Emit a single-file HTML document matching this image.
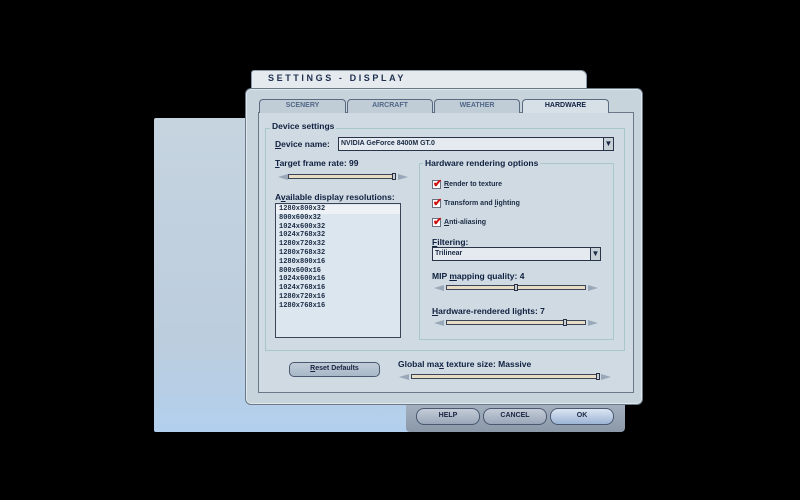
<!DOCTYPE html><html><head><style>
*{margin:0;padding:0;box-sizing:border-box}
body{width:800px;height:500px;background:#000;position:relative;overflow:hidden;font-family:"Liberation Sans",sans-serif;font-weight:bold;color:#1a2a44}
.a{position:absolute}
.t{font-size:8px}
.l{font-size:8.5px;color:#102040}
.btn{position:absolute;border:1.5px solid #4a5870;border-radius:8px;background:linear-gradient(#c4ccd8,#9aa6b8);font-size:7px;text-align:center;color:#1a2440}
.sl{position:absolute;height:5px;background:#e8dcc4;border:1px solid #3a4458}
.th{position:absolute;width:4px;height:7px;background:#c8d0d8;border:1px solid #2a3040}
.cb{position:absolute;width:9px;height:9px;background:#fff;border:1px solid #6a7080;color:#d01010;font-size:11px;line-height:7px}
.item{font-size:7px;height:8.8px;line-height:8.8px;padding-left:3px;font-family:"Liberation Mono",monospace;font-weight:bold}
.tl{position:absolute;width:0;height:0;border-top:3px solid transparent;border-bottom:3px solid transparent;border-right:10px solid #98a8b8}
.tr{position:absolute;width:0;height:0;border-top:3px solid transparent;border-bottom:3px solid transparent;border-left:10px solid #98a8b8}
</style></head><body>
<div class="a" style="left:154px;top:118px;width:258px;height:314px;background:linear-gradient(#c6d4e0 0%,#bccddd 70%,#b2d0ee 100%);border-radius:2px"></div>
<div class="a" style="left:251px;top:70px;width:336px;height:24px;background:#e4eaee;border:1px solid #8898a8;border-radius:3px 6px 0 0"></div>
<div class="a" style="left:268px;top:73px;font-size:9px;letter-spacing:2.6px;color:#203050">SETTINGS - DISPLAY</div>
<div class="a" style="left:406px;top:400px;width:219px;height:32px;background:linear-gradient(#a8b4c2,#8a98a8);border-radius:0 0 4px 4px"></div>
<div class="btn" style="left:416px;top:408px;width:64px;height:17px;line-height:14px">HELP</div>
<div class="btn" style="left:483px;top:408px;width:64px;height:17px;line-height:14px">CANCEL</div>
<div class="btn" style="left:550px;top:408px;width:64px;height:17px;line-height:14px;background:linear-gradient(#dce6f2,#9cb4d4)">OK</div>
<div class="a" style="left:245px;top:88px;width:398px;height:317px;background:#c8d4dc;border:1px solid #6a7888;border-radius:6px;box-shadow:inset 0 0 0 1px #e0e8ee"></div>
<div class="a" style="left:258px;top:112px;width:376px;height:281px;border:1px solid #6a7888;background:#cfdae2"></div>
<div class="a t" style="left:259px;top:99px;width:87px;height:14px;border:1px solid #5a6a80;border-bottom:none;border-radius:4px 4px 0 0;background:#c0ccd6;text-align:center;line-height:12px;color:#506888;font-size:7px">SCENERY</div>
<div class="a t" style="left:347px;top:99px;width:86px;height:14px;border:1px solid #5a6a80;border-bottom:none;border-radius:4px 4px 0 0;background:#c0ccd6;text-align:center;line-height:12px;color:#506888;font-size:7px">AIRCRAFT</div>
<div class="a t" style="left:434px;top:99px;width:86px;height:14px;border:1px solid #5a6a80;border-bottom:none;border-radius:4px 4px 0 0;background:#c0ccd6;text-align:center;line-height:12px;color:#506888;font-size:7px">WEATHER</div>
<div class="a t" style="left:522px;top:99px;width:87px;height:14px;border:1px solid #5a6a80;border-bottom:none;border-radius:4px 4px 0 0;background:#d6e0e6;text-align:center;line-height:12px;color:#102040;font-size:7px">HARDWARE</div>
<div class="a" style="left:265px;top:128px;width:360px;height:223px;border:1px solid #a8c8c8"></div>
<div class="a l" style="left:270px;top:121px;background:#cfdae2;padding:0 2px">Device settings</div>
<div class="a l" style="left:275px;top:139px"><u>D</u>evice name:</div>
<div class="a" style="left:338px;top:137px;width:276px;height:14px;background:#e4eaf0;border:1px solid #2a3448;font-size:7px;line-height:12px;padding-left:2px">NVIDIA GeForce 8400M GT.0</div>
<div class="a" style="left:603px;top:137px;width:11px;height:14px;background:#c8d0d8;border:1px solid #2a3448;font-size:8px;text-align:center;line-height:12px">▼</div>
<div class="a l" style="left:275px;top:158px"><u>T</u>arget frame rate: 99</div>
<div class="tl" style="left:278px;top:174px"></div>
<div class="sl" style="left:288px;top:174px;width:106px"></div>
<div class="th" style="left:392px;top:173px"></div>
<div class="tr" style="left:398px;top:174px"></div>
<div class="a l" style="left:275px;top:192px">A<u>v</u>ailable display resolutions:</div>
<div class="a" style="left:275px;top:203px;width:126px;height:135px;background:#dce6ee;border:1px solid #3a4458;padding-top:1px">
<div class="item" style="background:#eef2f6">1280x800x32</div><div class="item">800x600x32</div><div class="item">1024x600x32</div><div class="item">1024x768x32</div><div class="item">1280x720x32</div><div class="item">1280x768x32</div><div class="item">1280x800x16</div><div class="item">800x600x16</div><div class="item">1024x600x16</div><div class="item">1024x768x16</div><div class="item">1280x720x16</div><div class="item">1280x768x16</div></div>
<div class="a" style="left:419px;top:163px;width:195px;height:177px;border:1px solid #a8c8c8"></div>
<div class="a l" style="left:423px;top:158px;background:#cfdae2;padding:0 2px">Hardware rendering options</div>
<div class="cb" style="left:432px;top:180px">✔</div><div class="a t" style="left:444px;top:181px;font-size:7px"><u>R</u>ender to texture</div>
<div class="cb" style="left:432px;top:199px">✔</div><div class="a t" style="left:444px;top:200px;font-size:7px">Transform and <u>l</u>ighting</div>
<div class="cb" style="left:432px;top:218px">✔</div><div class="a t" style="left:444px;top:219px;font-size:7px"><u>A</u>nti-aliasing</div>
<div class="a l" style="left:432px;top:237px"><u>F</u>iltering:</div>
<div class="a" style="left:432px;top:247px;width:169px;height:14px;background:#e4eaf0;border:1px solid #2a3448;font-size:7px;line-height:12px;padding-left:2px">Trilinear</div>
<div class="a" style="left:590px;top:247px;width:11px;height:14px;background:#c8d0d8;border:1px solid #2a3448;font-size:8px;text-align:center;line-height:12px">▼</div>
<div class="a l" style="left:432px;top:271px">MIP <u>m</u>apping quality: 4</div>
<div class="tl" style="left:434px;top:285px"></div>
<div class="sl" style="left:446px;top:285px;width:140px"></div><div class="th" style="left:514px;top:284px"></div>
<div class="tr" style="left:588px;top:285px"></div>
<div class="a l" style="left:432px;top:306px"><u>H</u>ardware-rendered lights: 7</div>
<div class="tl" style="left:434px;top:320px"></div>
<div class="sl" style="left:446px;top:320px;width:140px"></div><div class="th" style="left:563px;top:319px"></div>
<div class="tr" style="left:588px;top:320px"></div>
<div class="btn" style="left:289px;top:362px;width:91px;height:15px;line-height:12px;border-radius:5px;background:linear-gradient(#c0ccd8,#a8b8c8)"><u>R</u>eset Defaults</div>
<div class="a l" style="left:398px;top:359px">Global ma<u>x</u> texture size: Massive</div>
<div class="tl" style="left:399px;top:374px"></div>
<div class="sl" style="left:411px;top:374px;width:188px"></div><div class="th" style="left:596px;top:373px"></div>
<div class="tr" style="left:601px;top:374px"></div>
</body></html>
